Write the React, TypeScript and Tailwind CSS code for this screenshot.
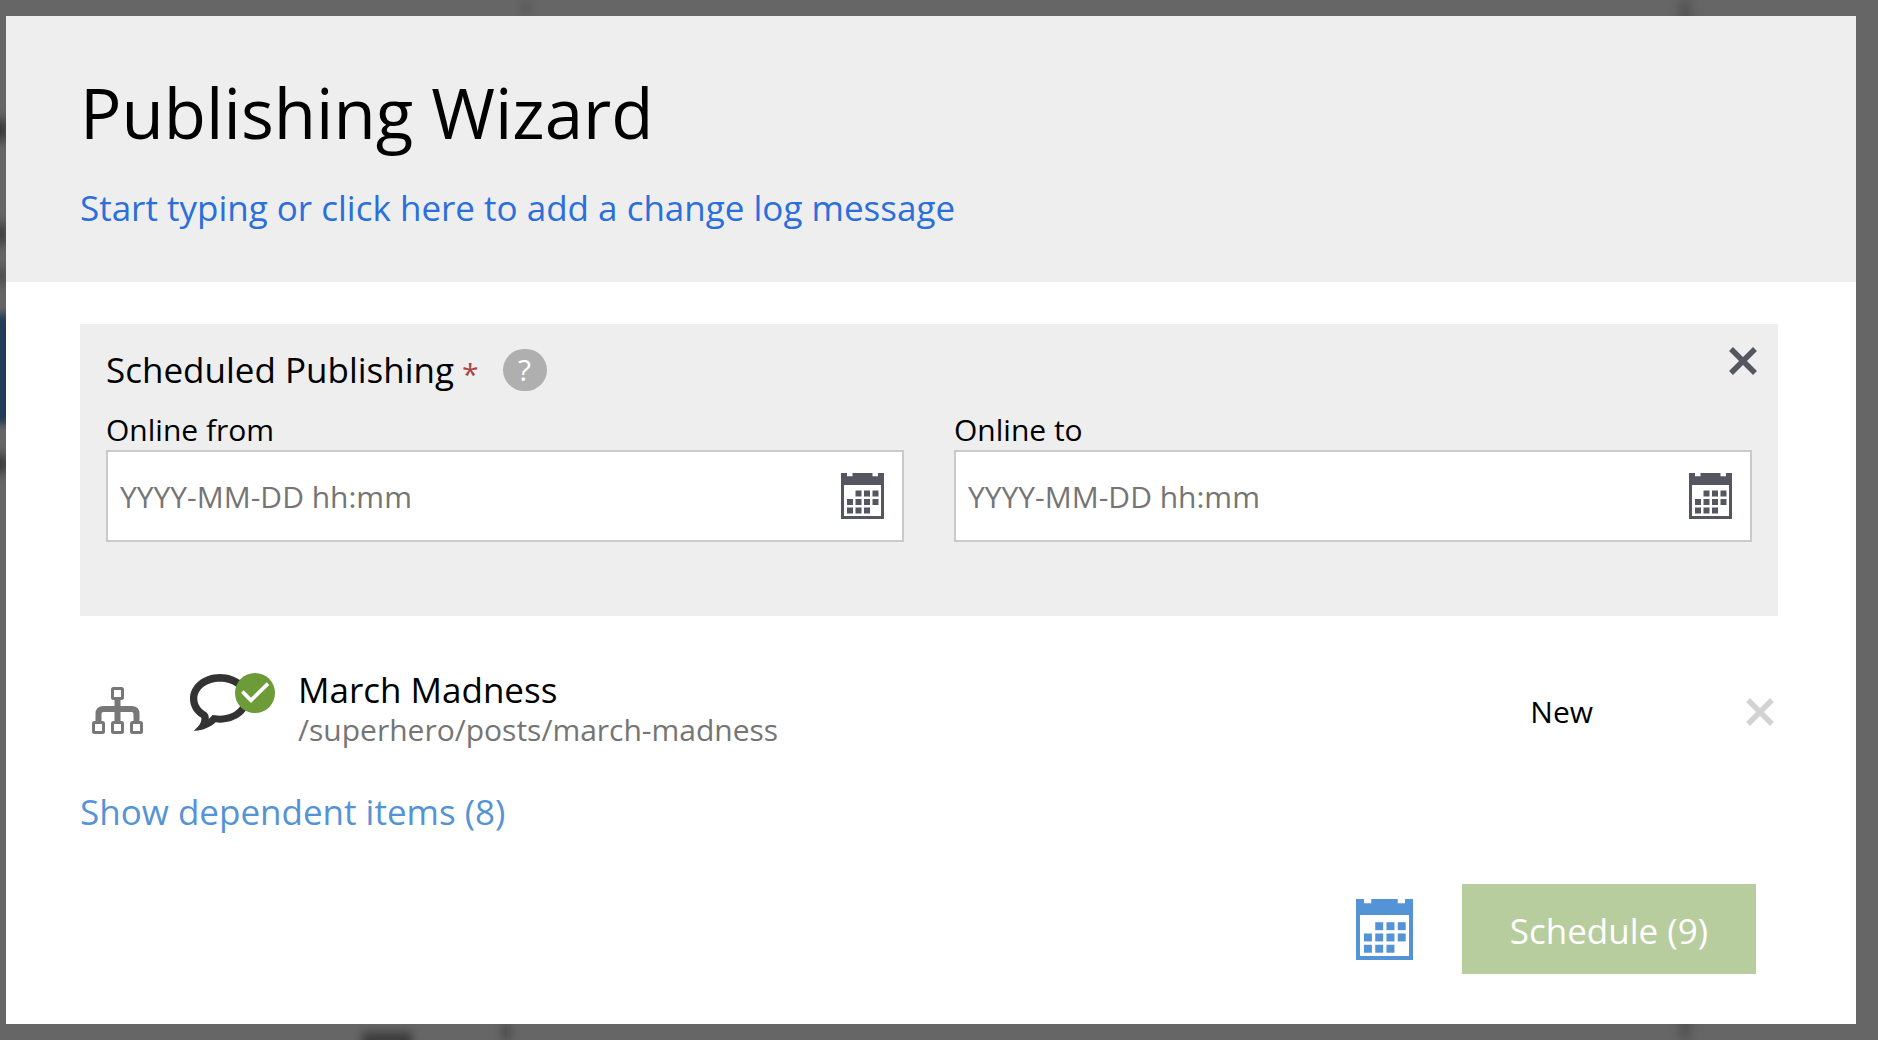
import React, { useState } from "react";

type IconProps = { className?: string };

function CalendarIcon({ className }: IconProps) {
  const days = [
    [14.5, 17.5], [23, 17.5], [31.5, 17.5],
    [6, 26], [14.5, 26], [23, 26], [31.5, 26],
    [6, 34.5], [14.5, 34.5], [23, 34.5],
  ];
  return (
    <svg className={className} viewBox="0 0 43 46" fill="currentColor" preserveAspectRatio="none" aria-hidden="true">
      <path fillRule="evenodd" d="M0 0H6V3.200H11.500V0H31.500V3.200H37V0H43V46H0ZM3 12V43H40V12Z" />
      {days.map(([x, y]) => (
        <rect key={`${x}-${y}`} x={x} y={y} width="6" height="6" />
      ))}
    </svg>
  );
}

function CrossIcon({ className }: IconProps) {
  return (
    <svg className={className} viewBox="0 0 28 28" stroke="currentColor" strokeWidth="5.500" aria-hidden="true">
      <path d="M2 2L26 26M26 2L2 26" />
    </svg>
  );
}

function TreeIcon({ className }: IconProps) {
  return (
    <svg className={className} viewBox="0 0 51 47" fill="none" stroke="currentColor" aria-hidden="true">
      <path strokeWidth="6" d="M6.500 36V27Q6.500 22 11.500 22H39.500Q44.500 22 44.500 27V36M25.500 12V36" />
      <g strokeWidth="3" fill="white">
        <rect x="20.500" y="1.500" width="10" height="10" rx="1" />
        <rect x="1.500" y="35.500" width="10" height="10" rx="1" />
        <rect x="20.500" y="35.500" width="10" height="10" rx="1" />
        <rect x="39.500" y="35.500" width="10" height="10" rx="1" />
      </g>
    </svg>
  );
}

function CommentIcon({ className }: IconProps) {
  return (
    <svg className={className} viewBox="330 64 258 180" aria-hidden="true">
      <path
        fill="#333333"
        fillRule="evenodd"
        d="M420 70C370 70 330 103 330 144C330 169 344 189 364 201C366 216 355 228 341 240C368 241 392 229 407 215L420 216C470 216 510 183 510 143C510 103 470 70 420 70ZM420 93C458 93 488 115 488 143C488 172 458 195 420 195L398 193L386 205C388 190 380 185 372 180C359 171 352 159 352 143C352 115 382 93 420 93Z"
      />
      <circle cx="525" cy="127" r="60" fill="#6c9b38" />
      <path d="M487 123L513 149L564 99" fill="none" stroke="white" strokeWidth="11" />
    </svg>
  );
}

function DateField({ id, label }: { id: string; label: string }) {
  return (
    <div className="flex min-w-0 flex-1 flex-col">
      <label htmlFor={id} className="text-[30px] leading-10">
        {label}
      </label>
      <div className="flex h-[92px] items-center border-2 border-[#cacaca] bg-white pl-3 pr-[18px]">
        <input
          id={id}
          type="text"
          placeholder="YYYY-MM-DD hh:mm"
          className="h-full min-w-0 flex-1 bg-transparent text-[30px] outline-none placeholder:text-[#757575]"
        />
        <button type="button" aria-label={`Pick date: ${label}`} className="text-[#54575f]">
          <CalendarIcon className="h-[46px] w-[43px]" />
        </button>
      </div>
    </div>
  );
}

function Backdrop() {
  return (
    <div className="absolute inset-0 overflow-hidden" aria-hidden="true">
      <div className="absolute bottom-0 left-[502px] h-4 w-2 bg-[#484848] blur-[4px]" />
      <div className="absolute left-[522px] top-0 h-4 w-2 bg-[#5a5a5a] blur-[4px]" />
      <div className="absolute inset-y-0 left-[1681px] w-2 bg-[#484848] blur-[6px]" />
      <div className="absolute -left-4 top-[120px] h-5 w-6 bg-[#333333] blur-[6px]" />
      <div className="absolute -left-4 top-[224px] h-5 w-6 bg-[#3c3c3c] blur-[6px]" />
      <div className="absolute -left-4 top-[268px] h-4 w-6 bg-[#4c4c4c] blur-[6px]" />
      <div className="absolute -left-8 top-[314px] h-[110px] w-14 bg-[#223b58] blur-[4px]" />
      <div className="absolute -left-4 top-[456px] h-4 w-6 bg-[#333333] blur-[6px]" />
      <div className="absolute -bottom-4 left-[362px] h-6 w-[50px] bg-[#3c3c3c] blur-[5px]" />
    </div>
  );
}

export default function App() {
  const [scheduling, setScheduling] = useState(true);
  return (
    <div className="relative min-h-screen bg-[#666666] py-4 pl-1.5 pr-[22px] font-['Open_Sans','Noto_Sans',sans-serif] text-black">
      <Backdrop />
      <div role="dialog" aria-labelledby="wizard-title" className="relative bg-white">
        <header className="flex flex-col items-start bg-[#eeeeee] px-[74px] pb-12 pt-12">
          <h1 id="wizard-title" className="text-[69px] leading-[96px]">
            Publishing Wizard
          </h1>
          <button type="button" className="mt-[22px] text-[35px] leading-[52px] text-[#2a6fdb]">
            Start typing or click here to add a change log message
          </button>
        </header>

        <main className="pb-[50px] pl-[74px] pr-[78px] pt-[42px]">
          {scheduling && (
            <section aria-labelledby="schedule-title" className="relative bg-[#eeeeee] px-[26px] pb-[74px] pt-5">
              <div className="flex items-center">
                <h2 id="schedule-title" className="text-[35px] leading-[52px]">
                  Scheduled Publishing
                </h2>
                <span className="ml-2 mt-2 text-[30px] leading-none text-[#a94442]">*</span>
                <button
                  type="button"
                  aria-label="Help"
                  className="ml-6 flex h-[42px] w-11 items-center justify-center rounded-[21px] bg-[#afafaf] text-[30px] leading-none text-white"
                >
                  ?
                </button>
              </div>
              <button
                type="button"
                aria-label="Close scheduled publishing"
                onClick={() => setScheduling(false)}
                className="absolute right-[21px] top-[23px] text-[#54575f]"
              >
                <CrossIcon className="size-7" />
              </button>
              <div className="mt-[14px] flex gap-[50px]">
                <DateField id="online-from" label="Online from" />
                <DateField id="online-to" label="Online to" />
              </div>
            </section>
          )}

          <div className="mt-[52px] flex items-center">
            <TreeIcon className="ml-3 mt-1 h-[47px] w-[51px] text-[#777777]" />
            <CommentIcon className="mb-3 ml-[47px] h-[60px] w-[86px]" />
            <div className="ml-[22px] flex-1">
              <p className="text-[35px] leading-[44px]">March Madness</p>
              <p className="text-[30px] leading-9 text-[#757575]">/superhero/posts/march-madness</p>
            </div>
            <span className="mt-2 text-[30px] leading-10">New</span>
            <button type="button" aria-label="Remove March Madness" className="ml-[153px] mr-1 mt-2 text-[#d3d3d3]">
              <CrossIcon className="size-7" />
            </button>
          </div>

          <button type="button" className="mt-[38px] block text-[35px] leading-[52px] text-[#5593d7]">
            Show dependent items (8)
          </button>

          <footer className="mt-[46px] flex items-center justify-end gap-[49px] pr-[22px]">
            <button
              type="button"
              aria-label="Toggle schedule"
              onClick={() => setScheduling(!scheduling)}
              className="text-[#5593d7]"
            >
              <CalendarIcon className="h-[61px] w-[57px]" />
            </button>
            <button type="button" className="h-[90px] bg-[#b7cd9d] px-12 pt-1 text-[35px] text-white">
              Schedule (9)
            </button>
          </footer>
        </main>
      </div>
    </div>
  );
}
